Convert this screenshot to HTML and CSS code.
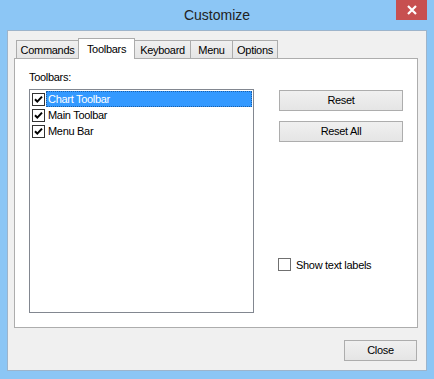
FILE: index.html
```html
<!DOCTYPE html>
<html lang="en">
<head>
  <meta charset="UTF-8">
  <title>Customize</title>
  <link rel="stylesheet" href="styles.css">
</head>
<body>
<div class="window">
  <div class="titlebar">Customize</div>
  <div class="close-x">
    <svg width="10" height="10" viewBox="0 0 10 10"><path d="M1 1L9 9M9 1L1 9" stroke="#fff" stroke-width="2.2"/></svg>
  </div>
  <div class="client">
    <div class="tabs">
      <div class="tab t-commands">Commands</div>
      <div class="tab t-toolbars active">Toolbars</div>
      <div class="tab t-keyboard">Keyboard</div>
      <div class="tab t-menu">Menu</div>
      <div class="tab t-options">Options</div>
    </div>
    <div class="panel">
      <div class="left">
        <div class="label">Toolbars:</div>
        <div class="list">
          <div class="row">
            <span class="check on"><svg width="11" height="11" viewBox="0 0 11 11"><path d="M2 5.2L4.3 7.6L9 2.6" fill="none" stroke="#000" stroke-width="2"/></svg></span>
            <span class="name selected">Chart Toolbar</span>
          </div>
          <div class="row">
            <span class="check on"><svg width="11" height="11" viewBox="0 0 11 11"><path d="M2 5.2L4.3 7.6L9 2.6" fill="none" stroke="#000" stroke-width="2"/></svg></span>
            <span class="name">Main Toolbar</span>
          </div>
          <div class="row">
            <span class="check on"><svg width="11" height="11" viewBox="0 0 11 11"><path d="M2 5.2L4.3 7.6L9 2.6" fill="none" stroke="#000" stroke-width="2"/></svg></span>
            <span class="name">Menu Bar</span>
          </div>
        </div>
      </div>
      <div class="right">
        <div class="btn wide">Reset</div>
        <div class="btn wide">Reset All</div>
        <div class="opt">
          <span class="check"></span>
          <span>Show text labels</span>
        </div>
      </div>
    </div>
    <div class="footer">
      <div class="btn close">Close</div>
    </div>
  </div>
</div>
</body>
</html>
```

FILE: styles.css
```css
* {
  margin: 0;
  padding: 0;
  box-sizing: border-box;
}

body {
  font-family: "Liberation Sans", Arial, sans-serif;
  font-size: 11px;
  letter-spacing: -0.3px;
  color: #000;
}

.window {
  width: 434px;
  height: 379px;
  background: #8cc6f5;
  position: relative;
}

.titlebar {
  height: 30px;
  line-height: 30px;
  text-align: center;
  font-size: 14px;
  letter-spacing: 0;
  color: #222;
}

.close-x {
  position: absolute;
  top: 0;
  right: 7px;
  width: 31px;
  height: 20px;
  background: #c75050;
  display: flex;
  align-items: center;
  justify-content: center;
}

.client {
  margin: 0 7px;
  height: 341px;
  border: 1px solid #9db4cb;
  background: #f0f0f0;
  padding-top: 7px;
}

.tabs {
  display: flex;
  align-items: flex-end;
  height: 20px;
  margin-left: 8px;
}

.tab {
  height: 18px;
  border: 1px solid #acacac;
  border-bottom: none;
  background: linear-gradient(#f0f0f0, #e5e5e5);
  margin-left: -1px;
  text-align: center;
  line-height: 16px;
  padding-top: 1px;
}

.tab:first-child {
  margin-left: 0;
}

.tab.active {
  height: 21px;
  margin-bottom: -1px;
  background: #fff;
  position: relative;
  z-index: 1;
  padding-top: 2px;
}

.t-commands { width: 63px; }
.t-toolbars { width: 57px; }
.t-keyboard { width: 57px; }
.t-menu { width: 43px; }
.t-options { width: 46px; }

.panel {
  margin-left: 6px;
  width: 404px;
  height: 270px;
  border: 1px solid #adadad;
  background: #fff;
  display: flex;
  padding: 12px 14px;
}

.label {
  height: 13px;
  line-height: 13px;
  margin-bottom: 5px;
}

.list {
  width: 225px;
  height: 224px;
  border: 1px solid #828790;
  padding: 1px 1px 0 2px;
}

.row {
  display: flex;
  align-items: center;
  height: 16px;
}

.check {
  width: 13px;
  height: 13px;
  border: 1px solid #333;
  background: #fff;
  margin-right: 1px;
  display: flex;
  align-items: center;
  justify-content: center;
  flex-shrink: 0;
}

.name {
  flex: 1;
  height: 16px;
  line-height: 16px;
  padding-left: 2px;
}

.name.selected {
  background: #3399ff;
  color: #fff;
  outline: 1px dotted #1c5fa8;
  outline-offset: -1px;
}

.right {
  margin-left: 25px;
  padding-top: 19px;
  display: flex;
  flex-direction: column;
}

.btn {
  height: 21px;
  border: 1px solid #adadad;
  background: linear-gradient(#f0f0f0, #e5e5e5);
  text-align: center;
  line-height: 19px;
}

.btn.wide {
  width: 124px;
  margin-bottom: 10px;
}

.opt {
  margin-top: 106px;
  margin-left: -1px;
  display: flex;
  align-items: center;
  gap: 4px;
  height: 13px;
}

.opt .check {
  border-color: #707070;
}

.footer {
  display: flex;
  justify-content: flex-end;
  padding-right: 9px;
  margin-top: 12px;
}

.btn.close {
  width: 73px;
}
```
